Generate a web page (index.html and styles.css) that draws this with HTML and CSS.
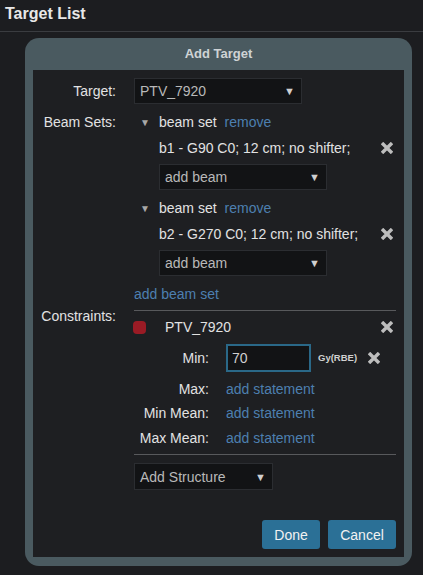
FILE: index.html
```html
<!DOCTYPE html>
<html>
<head>
<meta charset="utf-8">
<link rel="stylesheet" href="styles.css">
</head>
<body>
<div class="topbar">Target List</div>
<div class="modal">
  <div class="modal-title">Add Target</div>
  <div class="modal-body">
    <div class="form">
      <div class="label lbl-target">Target:</div>
      <div class="cell">
        <div class="select sel-target"><span>PTV_7920</span><span class="arrow">▼</span></div>
      </div>

      <div class="label lbl-beams">Beam Sets:</div>
      <div class="cell beams">
        <div class="beamset">
          <div class="bs-head"><span class="tri">▼</span><span class="bs-name">beam set</span><a class="link">remove</a></div>
          <div class="bs-row"><span>b1 - G90 C0; 12 cm; no shifter;</span><svg class="xicon" viewBox="0 0 12 12"><path d="M1 1L11 11M11 1L1 11"/></svg></div>
          <div class="select sel-beam"><span>add beam</span><span class="arrow">▼</span></div>
        </div>
        <div class="beamset">
          <div class="bs-head"><span class="tri">▼</span><span class="bs-name">beam set</span><a class="link">remove</a></div>
          <div class="bs-row"><span>b2 - G270 C0; 12 cm; no shifter;</span><svg class="xicon" viewBox="0 0 12 12"><path d="M1 1L11 11M11 1L1 11"/></svg></div>
          <div class="select sel-beam"><span>add beam</span><span class="arrow">▼</span></div>
        </div>
        <a class="link add-set">add beam set</a>
      </div>

      <div class="label lbl-cons">Constraints:</div>
      <div class="cell">
        <div class="cons">
          <div class="cons-head"><span class="dot"></span><span class="cons-name">PTV_7920</span><svg class="xicon" viewBox="0 0 12 12"><path d="M1 1L11 11M11 1L1 11"/></svg></div>
          <div class="stat stat-min"><span class="slabel">Min:</span><span class="sval"><span class="input">70</span><span class="unit">Gy(RBE)</span><svg class="xicon xsmall" viewBox="0 0 12 12"><path d="M1 1L11 11M11 1L1 11"/></svg></span></div>
          <div class="stat stat-max"><span class="slabel">Max:</span><a class="link">add statement</a></div>
          <div class="stat stat-mmin"><span class="slabel">Min Mean:</span><a class="link">add statement</a></div>
          <div class="stat stat-mmax"><span class="slabel">Max Mean:</span><a class="link">add statement</a></div>
        </div>
        <div class="select sel-struct"><span>Add Structure</span><span class="arrow">▼</span></div>
      </div>
    </div>
    <div class="buttons">
      <button class="btn btn-done">Done</button>
      <button class="btn btn-cancel">Cancel</button>
    </div>
  </div>
</div>
</body>
</html>
```

FILE: styles.css
```css
html, body {
  margin: 0;
  padding: 0;
  background: #1c1d20;
  font-family: "Liberation Sans", Arial, sans-serif;
  font-size: 14px;
  color: #e2e2e2;
}
.topbar {
  height: 20px;
  line-height: 20px;
  padding: 4px 0 7px 5px;
  font-size: 16px;
  font-weight: bold;
  color: #e8e8e8;
  border-bottom: 1px solid #3a3c40;
}
.modal {
  margin: 6px 11px 0 25px;
  width: 387px;
  height: 528px;
  box-sizing: border-box;
  background: #4a5a60;
  border-radius: 14px;
  padding: 0 8px 9px 8px;
  display: flex;
  flex-direction: column;
}
.modal-title {
  height: 32px;
  line-height: 32px;
  text-align: center;
  font-size: 13px;
  font-weight: bold;
  color: #cfd3d5;
}
.modal-body {
  flex: 1;
  background: #1e1f22;
  padding: 8px 8px 0 0;
  display: flex;
  flex-direction: column;
}
.form {
  display: grid;
  grid-template-columns: 83px 262px;
  column-gap: 18px;
  align-items: start;
}
.label {
  text-align: right;
  line-height: 20px;
  color: #e2e2e2;
}
.lbl-target { line-height: 26px; }
.lbl-beams { margin-top: 8px; }
.lbl-cons { margin-top: -4px; }
.select {
  box-sizing: border-box;
  height: 26px;
  background: #121315;
  border: 1px solid #2b2d31;
  display: flex;
  align-items: center;
  justify-content: space-between;
  padding: 0 6px 0 5px;
  color: #b9b9b9;
}
.arrow {
  font-size: 11px;
  color: #cfcfcf;
}
.sel-target { width: 168px; }
.beams { padding-top: 8px; }
.beamset { padding-left: 25px; margin-bottom: 8px; }
.bs-head {
  height: 20px;
  display: flex;
  align-items: center;
  position: relative;
}
.tri {
  position: absolute;
  left: -19px;
  font-size: 10px;
  color: #a8a8a8;
}
.bs-name { margin-right: 8px; }
.link {
  color: #4d7fb0;
}
.bs-row {
  margin-top: 6px;
  height: 20px;
  display: flex;
  align-items: center;
  justify-content: space-between;
  padding-right: 3px;
}
.sel-beam { margin-top: 6px; width: 168px; }
.add-set {
  display: block;
  line-height: 20px;
  margin-bottom: 6px;
}
.xicon {
  width: 12px;
  height: 12px;
  fill: none;
  stroke: #bdbdbd;
  stroke-width: 3.4;
  flex: none;
}
.cons {
  border-top: 1px solid #58595c;
  border-bottom: 1px solid #58595c;
  padding: 6px 3px 6px 0;
}
.cons-head {
  height: 20px;
  display: flex;
  align-items: center;
}
.dot {
  width: 13px;
  height: 13px;
  border-radius: 4px;
  background: #9a1b25;
  margin-left: -1px;
  margin-right: 19px;
}
.cons-name { flex: 1; }
.stat {
  display: grid;
  grid-template-columns: 75px 1fr;
  column-gap: 17px;
  align-items: center;
  line-height: 20px;
}
.slabel { text-align: right; }
.stat-min { margin-top: 7px; }
.stat-max { margin-top: 7px; }
.stat-mmin { margin-top: 4px; }
.stat-mmax { margin-top: 5px; }
.sval {
  display: flex;
  align-items: center;
}
.input {
  box-sizing: border-box;
  width: 85px;
  height: 28px;
  border: 2px solid #2a6888;
  background: #121315;
  color: #d0d0d0;
  padding-left: 4px;
  line-height: 24px;
}
.unit {
  font-size: 9.5px;
  font-weight: bold;
  color: #d0d0d0;
  margin-left: 7px;
}
.xsmall { margin-left: 11px; }
.sel-struct {
  margin-top: 8px;
  width: 139px;
  height: 27px;
}
.buttons {
  margin-top: 30px;
  display: flex;
  justify-content: flex-end;
  gap: 8px;
}
.btn {
  height: 29px;
  border: none;
  border-radius: 3px;
  background: #2b7096;
  color: #f2f2f2;
  font-family: "Liberation Sans", Arial, sans-serif;
  font-size: 14px;
  padding: 0;
}
.btn-done { width: 58px; }
.btn-cancel { width: 68px; }
```
